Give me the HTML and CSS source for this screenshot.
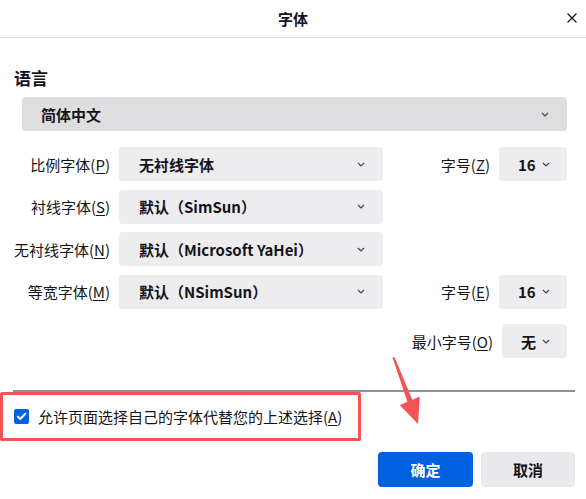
FILE: index.html
```html
<!DOCTYPE html>
<html lang="zh-CN">
<head>
    <meta charset="UTF-8">
    <title>字体</title>
    <link rel="stylesheet" href="styles.css">
</head>
<body>
    <div class="dialog">
        <!-- Title bar -->
        <header class="titlebar">
            <span class="title">字体</span>
            <button class="close" aria-label="关闭">
                <svg width="10" height="10" viewBox="0 0 10 10"><path d="M0.5 0.5 L9.5 9.5 M9.5 0.5 L0.5 9.5" stroke="#15141a" stroke-width="1.3" fill="none"/></svg>
            </button>
        </header>

        <!-- Fonts for the language -->
        <section class="content">
            <h2 class="section-title">语言</h2>
            <div class="select select-lang">
                <span>简体中文</span>
                <svg class="chev" width="8" height="5" viewBox="0 0 8 5"><path d="M1 1 L4 4 L7 1" stroke="#444" stroke-width="1.2" fill="none"/></svg>
            </div>

            <div class="font-grid">
                <label class="field-label">比例字体(<u>P</u>)</label>
                <div class="select select-font"><span>无衬线字体</span><svg class="chev" width="8" height="5" viewBox="0 0 8 5"><path d="M1 1 L4 4 L7 1" stroke="#444" stroke-width="1.2" fill="none"/></svg></div>
                <span></span>
                <label class="field-label">字号(<u>Z</u>)</label>
                <div class="select select-size"><span>16</span><svg class="chev" width="8" height="5" viewBox="0 0 8 5"><path d="M1 1 L4 4 L7 1" stroke="#444" stroke-width="1.2" fill="none"/></svg></div>

                <label class="field-label">衬线字体(<u>S</u>)</label>
                <div class="select select-font"><span>默认（SimSun）</span><svg class="chev" width="8" height="5" viewBox="0 0 8 5"><path d="M1 1 L4 4 L7 1" stroke="#444" stroke-width="1.2" fill="none"/></svg></div>
                <span></span><span></span><span></span>

                <label class="field-label">无衬线字体(<u>N</u>)</label>
                <div class="select select-font"><span>默认（Microsoft YaHei）</span><svg class="chev" width="8" height="5" viewBox="0 0 8 5"><path d="M1 1 L4 4 L7 1" stroke="#444" stroke-width="1.2" fill="none"/></svg></div>
                <span></span><span></span><span></span>

                <label class="field-label">等宽字体(<u>M</u>)</label>
                <div class="select select-font"><span>默认（NSimSun）</span><svg class="chev" width="8" height="5" viewBox="0 0 8 5"><path d="M1 1 L4 4 L7 1" stroke="#444" stroke-width="1.2" fill="none"/></svg></div>
                <span></span>
                <label class="field-label">字号(<u>E</u>)</label>
                <div class="select select-size"><span>16</span><svg class="chev" width="8" height="5" viewBox="0 0 8 5"><path d="M1 1 L4 4 L7 1" stroke="#444" stroke-width="1.2" fill="none"/></svg></div>
            </div>

            <div class="min-row">
                <label class="field-label">最小字号(<u>O</u>)</label>
                <div class="select select-min"><span>无</span><svg class="chev" width="8" height="5" viewBox="0 0 8 5"><path d="M1 1 L4 4 L7 1" stroke="#444" stroke-width="1.2" fill="none"/></svg></div>
            </div>
        </section>

        <div class="divider"></div>

        <label class="allow">
            <span class="checkbox">
                <svg width="15" height="15" viewBox="0 0 15 15"><path d="M3.8 7.6 L6.3 10 L11.2 4.8" stroke="#fff" stroke-width="2" fill="none" stroke-linecap="round" stroke-linejoin="round"/></svg>
            </span>
            <span>允许页面选择自己的字体代替您的上述选择(<u>A</u>)</span>
        </label>

        <div class="actions">
            <button class="btn btn-primary">确定</button>
            <button class="btn">取消</button>
        </div>

        <!-- Annotation overlay -->
        <div class="mark-box"></div>
        <svg class="mark-arrow" width="586" height="499" viewBox="0 0 586 499">
            <polygon points="392.5,357.5 394.5,357 412.3,399.8 419.8,396.4 418,424 399.8,405.2 407.4,401.8" fill="#f25454"/>
        </svg>
    </div>
</body>
</html>
```

FILE: styles.css
```css
/* General */
body { margin: 0; background: #fff; color: #15141a; font-family: "Noto Sans CJK SC", "Noto Sans", sans-serif; font-size: 15px; }
.dialog { position: relative; width: 586px; height: 499px; overflow: hidden; }
u { text-decoration-thickness: 1px; text-underline-offset: 2px; }

/* Title bar */
.titlebar { height: 37px; border-bottom: 1px solid #e0e0e6; display: flex; align-items: center; justify-content: center; position: relative; }
.title { font-weight: 600; font-size: 15px; }
.close { position: absolute; right: 6px; top: 10px; width: 16px; height: 16px; padding: 0; border: 0; background: none; display: flex; align-items: center; justify-content: center; }

/* Content */
.content { padding-right: 19px; }
.section-title { margin: 28px 0 0 14px; font-size: 17px; line-height: 24px; font-weight: 700; }

.select { height: 34px; box-sizing: border-box; border-radius: 4px; background: #ededf0; display: flex; align-items: center; font-weight: 700; }
.select-lang { margin: 7px 0 0 22px; padding: 0 18px 0 19px; justify-content: space-between; background: #dedee0; }
.select-font { padding: 0 18px 0 20px; justify-content: space-between; }
.select-size { padding-left: 19px; gap: 6px; }
.select-min { width: 65px; padding-left: 19px; gap: 6px; }

/* Font grid */
.font-grid { display: grid; grid-template-columns: 111px 264px 1fr auto 68px; column-gap: 8px; row-gap: 8.5px; margin-top: 16px; }
.field-label { display: flex; align-items: center; justify-content: flex-end; white-space: nowrap; }
.font-grid .field-label:nth-of-type(n) { margin-right: 1px; }

.min-row { display: flex; justify-content: flex-end; gap: 9px; margin-top: 15.5px; }

/* Divider + checkbox */
.divider { height: 2px; background: #8f8f9d; margin: 32px 11px 0 13px; }
.allow { height: 48px; display: flex; align-items: center; gap: 9px; padding-left: 14px; }
.checkbox { width: 15px; height: 15px; border-radius: 2px; background: #0061e0; display: flex; }

/* Buttons */
.actions { display: flex; justify-content: flex-end; gap: 8px; margin-top: 12px; padding-right: 11px; }
.btn { width: 94px; height: 35px; border: 0; border-radius: 4px; background: #e9e9ed; color: #15141a; font: 700 15px "Noto Sans CJK SC", sans-serif; }
.btn-primary { width: 95px; background: #0061e0; color: #fff; }

/* Annotation */
.mark-box { position: absolute; left: 0; top: 392px; width: 355px; height: 43px; border: 3px solid #f25454; border-radius: 2px; }
.mark-arrow { position: absolute; left: 0; top: 0; pointer-events: none; }
```
